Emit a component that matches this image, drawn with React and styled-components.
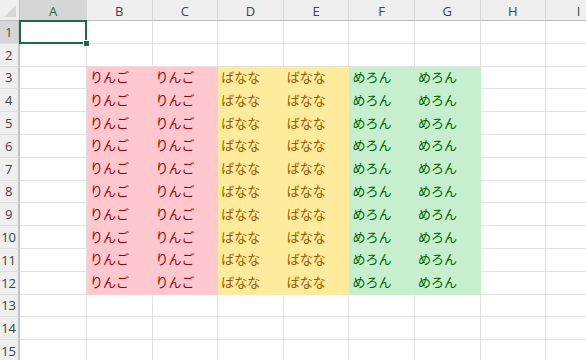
import React from 'react';
import styled, { createGlobalStyle, css } from 'styled-components';

const GlobalStyle = createGlobalStyle`
  html, body {
    margin: 0;
    padding: 0;
    background: #fff;
  }
  body {
    font-family: "Noto Sans", "Noto Sans CJK JP", sans-serif;
  }
`;

const COLS = ['A', 'B', 'C', 'D', 'E', 'F', 'G', 'H', 'I'];
const ROWS = Array.from({ length: 16 }, (_, i) => i + 1);

const tones = {
  apple: { bg: '#ffc7ce', fg: '#9c0006', text: 'りんご' },
  banana: { bg: '#ffeb9c', fg: '#9c5700', text: 'ばなな' },
  melon: { bg: '#c6efce', fg: '#006100', text: 'めろん' },
};

const toneFor = (row, col) => {
  if (row < 3 || row > 12) return null;
  if (col === 'B' || col === 'C') return 'apple';
  if (col === 'D' || col === 'E') return 'banana';
  if (col === 'F' || col === 'G') return 'melon';
  return null;
};

const Viewport = styled.div`
  width: 586px;
  height: 360px;
  overflow: hidden;
`;

const Sheet = styled.div`
  display: grid;
  grid-template-columns: 20px 67px repeat(7, 65.6px) 66px;
  grid-template-rows: 21px;
  grid-auto-rows: 22.8px;
  width: max-content;
`;

const Corner = styled.div`
  position: relative;
  background: #efefef;
  border-right: 1px solid #bdbdbd;
  border-bottom: 1px solid #bdbdbd;
  box-sizing: border-box;

  &::after {
    content: '';
    position: absolute;
    right: 3px;
    bottom: 3px;
    width: 12px;
    height: 12px;
    background: #d6d6d6;
    clip-path: polygon(100% 0, 100% 100%, 0 100%);
  }
`;

const ColHeader = styled.div`
  display: flex;
  align-items: center;
  justify-content: center;
  box-sizing: border-box;
  background: ${(p) => (p.$selected ? '#d6d6d6' : '#efefef')};
  border-right: 1px solid #d8d8d8;
  border-bottom: 1px solid #bdbdbd;
  color: ${(p) => (p.$selected ? '#1d6b40' : '#444')};
  font-family: "Open Sans", "Noto Sans", sans-serif;
  font-size: 13px;
  padding-top: 1px;
`;

const RowHeader = styled.div`
  display: flex;
  align-items: center;
  justify-content: center;
  box-sizing: border-box;
  background: ${(p) => (p.$selected ? '#d6d6d6' : '#efefef')};
  border-right: 2px solid #c4c4c4;
  border-bottom: 1px solid #dcdcdc;
  color: ${(p) => (p.$selected ? '#1d6b40' : '#444')};
  font-family: "Open Sans", "Noto Sans", sans-serif;
  font-size: 13px;
  letter-spacing: -0.3px;
  padding-right: 1px;
`;

const Cell = styled.div`
  position: relative;
  display: flex;
  align-items: center;
  box-sizing: border-box;
  padding: 0 0 2px 3px;
  border-right: 1px solid #e1e1e1;
  border-bottom: 1px solid #e1e1e1;
  font-family: "Noto Sans CJK JP", sans-serif;
  font-size: 13px;
  white-space: nowrap;

  ${(p) =>
    p.$tone &&
    css`
      background: ${tones[p.$tone].bg};
      border-color: ${tones[p.$tone].bg};
      color: ${tones[p.$tone].fg};
    `}

  ${(p) =>
    p.$active &&
    css`
      &::after {
        content: '';
        position: absolute;
        left: -1px;
        top: -1px;
        right: -1px;
        bottom: -1px;
        border: 2px solid #1d6b40;
        pointer-events: none;
      }
      &::before {
        content: '';
        position: absolute;
        right: -4px;
        bottom: -4px;
        width: 5px;
        height: 5px;
        background: #1d6b40;
        border: 1px solid #fff;
        z-index: 2;
      }
    `}
`;

export default function App() {
  return (
    <Viewport>
      <GlobalStyle />
      <Sheet>
        <Corner />
        {COLS.map((c) => (
          <ColHeader key={c} $selected={c === 'A'}>
            {c}
          </ColHeader>
        ))}
        {ROWS.map((r) => (
          <React.Fragment key={r}>
            <RowHeader $selected={r === 1}>{r}</RowHeader>
            {COLS.map((c) => {
              const tone = toneFor(r, c);
              return (
                <Cell key={c} $tone={tone} $active={r === 1 && c === 'A'}>
                  {tone ? tones[tone].text : ''}
                </Cell>
              );
            })}
          </React.Fragment>
        ))}
      </Sheet>
    </Viewport>
  );
}
